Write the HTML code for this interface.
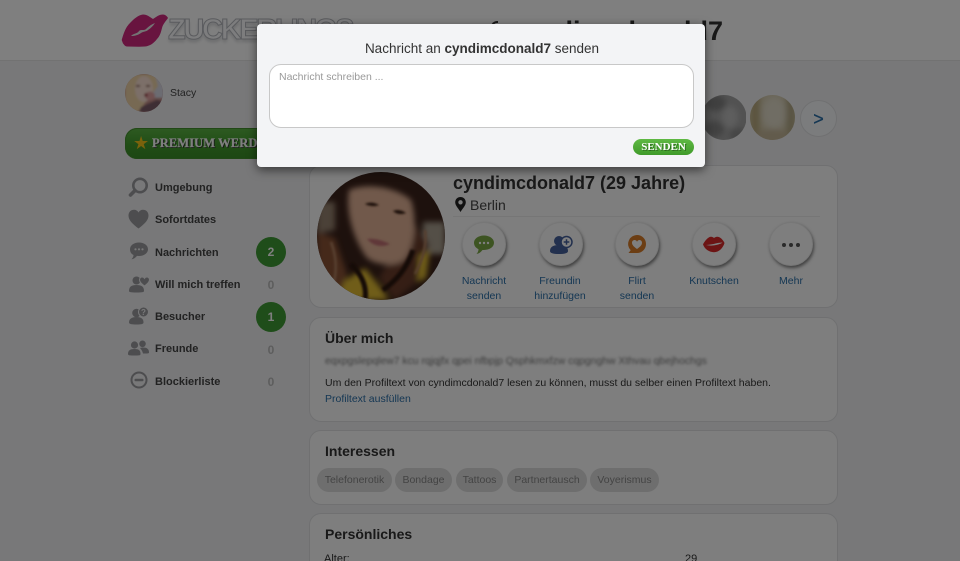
<!DOCTYPE html>
<html lang="de"><head><meta charset="utf-8"><title>cyndimcdonald7</title>
<style>
html,body{margin:0;padding:0;width:960px;height:561px;overflow:hidden;background:#f0f1f3;font-family:"Liberation Sans",sans-serif;color:#333}
#w{position:absolute;left:0;top:0;width:960px;height:561px;overflow:hidden;background:#f0f1f3}
.a{position:absolute;white-space:nowrap}
#hdr{left:0;top:0;width:960px;height:60px;background:#fff;border-bottom:1px solid #e4e4e4}
.card{position:absolute;left:309px;width:527px;background:#fcfcfc;border:1px solid #e0e1e3;border-radius:12px;box-sizing:content-box}
.m{left:155px;font-size:11px;font-weight:bold;color:#444;line-height:14px}
.z{left:265px;width:12px;text-align:center;font-size:12px;font-weight:bold;color:#bbb;line-height:14px}
.bd{left:256px;width:30px;height:30px;border-radius:50%;background:#3f9a35;color:#fff;font-size:12px;font-weight:bold;text-align:center;line-height:30px}
.c{width:44px;height:44px;border-radius:50%;background:#fcfcfc;box-shadow:1px 2px 3px rgba(0,0,0,.5);border:1px solid #eee;box-sizing:border-box;top:222px}
.l{width:76px;text-align:center;font-size:10.5px;line-height:15px;color:#2a6fa8;top:274px;white-space:normal}
.h{left:325px;font-size:14px;font-weight:bold;color:#333;line-height:16px}
.t{top:468px;height:24px;border-radius:12px;background:#dcdcdc;color:#888;font-size:10.5px;line-height:25px;text-align:center}
#ov{left:0;top:0;width:960px;height:561px;background:rgba(0,0,0,.5)}
#mod{left:257px;top:24px;width:448px;height:143px;background:#f3f4f6;border-radius:4px;box-shadow:0 3px 10px rgba(0,0,0,.55)}
</style></head><body><div id="w">
<div class="a" id="hdr"></div>

<svg class="a" style="left:121px;top:13px" width="48" height="35" viewBox="0 0 48 35"><path fill="#d0287f" d="M.7 27C3 19 5 14 9 10c4-4 8-8 13-8.500 4 0 7 2.500 10 4.500 3-2 6-4.500 10-4.500 2 0 4 1.500 5 3.500-2 3-5 6-6 10-1 4-2 8-5 11-3 4-7 7-12 7.500-6 .5-12 0-18 0-2 0-3-2-4-3z"/><path fill="#e8e8e8" d="M10 23c3-3 6-2 8-5 2-2 5 0 7-2 3-3 6-5 9-6-2 3-4 5-7 7-2 2-4 1-7 3-3 2-6 3-10 3z"/></svg>
<div class="a" style="left:168px;top:12px;font-size:29px;font-weight:bold;color:#fbfbfc;-webkit-text-stroke:1px #b4b7bd;letter-spacing:-2.300px;line-height:36px;text-shadow:0 3px 3px #d5d6d8">ZUCKERLINGS</div>
<div class="a" style="left:491px;top:21px;width:7px;height:6px;border:2px solid #333;border-bottom:0;border-right:0;border-radius:6px 0 0 0;box-sizing:border-box"></div>
<div class="a" style="left:491px;top:14px;width:232px;text-align:right;font-size:27px;font-weight:bold;color:#333;line-height:34px">cyndimcdonald7</div>

<svg class="a" style="left:125px;top:74px" width="38" height="38" viewBox="0 0 38 38"><defs><clipPath id="ca"><circle cx="19" cy="19" r="19"/></clipPath><filter id="b1"><feGaussianBlur stdDeviation="1"/></filter></defs><g clip-path="url(#ca)"><rect width="38" height="38" fill="#c08a86"/><g filter="url(#b1)"><rect x="27" y="0" width="12" height="24" fill="#d8d8e4"/><path d="M0 0h30l3 12-6 8-14 18H0z" fill="#eed3a6"/><ellipse cx="19" cy="15" rx="9" ry="13" fill="#f8dfd2"/><ellipse cx="13" cy="12" rx="2.200" ry="1.200" fill="#a07a70"/><ellipse cx="23" cy="12" rx="2.200" ry="1.200" fill="#a07a70"/><ellipse cx="25" cy="22" rx="5" ry="4.500" fill="#e0a0a0"/><circle cx="21" cy="21" r="1.800" fill="#a5484f"/><path d="M16 33l16-7 6 2v10H14z" fill="#7c5c68"/></g></g></svg>
<div class="a" style="left:170px;top:87px;font-size:10.500px;line-height:13px;color:#444">Stacy</div>

<div class="a" style="left:125px;top:128px;width:150px;height:31px;border-radius:12px;background:linear-gradient(#5cb544,#429a2c 55%,#3a8f27);box-shadow:inset 0 0 0 1px #44902f"></div>
<div class="a" style="left:133px;top:134px;font-size:18px;line-height:19px;color:#f5c518">★</div>
<div class="a" style="left:152px;top:136px;font-family:'Liberation Serif',serif;font-size:12.500px;font-weight:bold;line-height:15px;letter-spacing:.1px;color:#fff;text-shadow:1px 1px 0 #333;-webkit-text-stroke:.2px #fff">PREMIUM WERDEN</div>

<svg class="a" style="left:128px;top:176px" width="22" height="22" viewBox="0 0 22 22"><circle cx="12" cy="9.500" r="6.700" fill="none" stroke="#9a9b9e" stroke-width="2.600"/><path d="M7 14.500L2.500 19" stroke="#9a9b9e" stroke-width="3.600" stroke-linecap="round"/></svg>
<svg class="a" style="left:128px;top:209px" width="21" height="20" viewBox="0 0 21 20"><path fill="#9a9b9e" d="M10.500 19.500C4 14.500.5 11 .5 6.500.5 3 3 .8 6 .8c2 0 3.500 1 4.500 2.700C11.500 1.800 13 .8 15 .8c3 0 5.500 2.200 5.500 5.700 0 4.500-3.500 8-10 13z"/></svg>
<svg class="a" style="left:129px;top:242px" width="20" height="18" viewBox="0 0 20 18"><path fill="#9a9b9e" d="M10 .5c5 0 9 2.900 9 6.700S15 14 10 14l-2-.1C6.500 15.500 5 17 2.500 17.300 3.800 16 4.500 14.500 4.500 13 2 11.800 1 9.500 1 7.200 1 3.400 5 .5 10 .5z"/><circle cx="6.500" cy="7.300" r="1.100" fill="#eee"/><circle cx="10" cy="7.300" r="1.100" fill="#eee"/><circle cx="13.500" cy="7.300" r="1.100" fill="#eee"/></svg>
<svg class="a" style="left:129px;top:275px" width="21" height="18" viewBox="0 0 21 18"><circle cx="7.500" cy="5.500" r="4" fill="#9a9b9e"/><path fill="#9a9b9e" d="M0 16c0-4 2-6 7.500-6s7.500 2 7.500 6c0 1-1 1.500-7.500 1.500S0 17 0 16z"/><path fill="#9a9b9e" stroke="#f0f1f3" d="M15.500 11C12 8.500 10.500 7 10.500 4.800c0-1.600 1.200-2.800 2.600-2.800 1 0 1.900.5 2.400 1.400.5-.9 1.400-1.400 2.400-1.400 1.400 0 2.600 1.200 2.600 2.800 0 2.200-1.500 3.700-5 6.200z"/></svg>
<svg class="a" style="left:129px;top:307px" width="20" height="18" viewBox="0 0 20 18"><circle cx="7.500" cy="6" r="4.300" fill="#9a9b9e"/><path fill="#9a9b9e" d="M0 15.500c0-3.500 2.500-5.500 7.500-5.500s7 2 7 5.500c0 1.500-2 2-7 2s-7.500-.5-7.500-2z"/><circle cx="14.500" cy="5" r="5" fill="#9a9b9e" stroke="#f0f1f3"/><text x="14.500" y="8" font-size="8" font-weight="bold" text-anchor="middle" fill="#f0f1f3" font-family="Liberation Sans">?</text></svg>
<svg class="a" style="left:128px;top:340px" width="21" height="16" viewBox="0 0 21 16"><circle cx="6.500" cy="5" r="3.600" fill="#9a9b9e"/><path fill="#9a9b9e" d="M0 14c0-3.500 2-5 6.500-5s6 1.500 6 5c0 1.500-1.500 1.500-6 1.500S0 15.500 0 14z"/><circle cx="14.500" cy="3.800" r="3.300" fill="#9a9b9e"/><path fill="#9a9b9e" d="M12 8c1-.500 2-.5 3-.5 4 0 6 1.500 6 5 0 1-1 1-6 1-.5-2-1.500-4-3-5.500z"/></svg>
<svg class="a" style="left:130px;top:371px" width="18" height="18" viewBox="0 0 18 18"><circle cx="9" cy="9" r="7.500" fill="none" stroke="#9a9b9e" stroke-width="2"/><rect x="4.500" y="7.700" width="9" height="2.600" rx="1" fill="#9a9b9e"/></svg>

<div class="a m" style="top:181px">Umgebung</div>
<div class="a m" style="top:213px">Sofortdates</div>
<div class="a m" style="top:246px">Nachrichten</div>
<div class="a m" style="top:278px">Will mich treffen</div>
<div class="a m" style="top:310px">Besucher</div>
<div class="a m" style="top:342px">Freunde</div>
<div class="a m" style="top:375px">Blockierliste</div>
<div class="a bd" style="top:237px">2</div>
<div class="a bd" style="top:302px">1</div>
<div class="a z" style="top:278px">0</div>
<div class="a z" style="top:343px">0</div>
<div class="a z" style="top:375px">0</div>

<svg class="a" style="left:702px;top:95px" width="44" height="45" viewBox="0 0 44 45"><defs><clipPath id="cb"><circle cx="22" cy="22.500" r="22.500"/></clipPath><filter id="b2"><feGaussianBlur stdDeviation="3"/></filter></defs><g clip-path="url(#cb)"><rect width="44" height="45" fill="#a4a4a4"/><g filter="url(#b2)"><ellipse cx="14" cy="8" rx="10" ry="8" fill="#808080"/><ellipse cx="28" cy="22" rx="8" ry="11" fill="#bcbcbc"/><ellipse cx="12" cy="34" rx="10" ry="8" fill="#848484"/><ellipse cx="36" cy="40" rx="8" ry="7" fill="#8c8c8c"/></g></g></svg>
<svg class="a" style="left:750px;top:95px" width="45" height="45" viewBox="0 0 45 45"><defs><clipPath id="cc"><circle cx="22.500" cy="22.500" r="22.500"/></clipPath><filter id="b3"><feGaussianBlur stdDeviation="3"/></filter></defs><g clip-path="url(#cc)"><rect width="45" height="45" fill="#d4cbb0"/><g filter="url(#b3)"><rect x="0" y="0" width="10" height="45" fill="#b8a97e"/><rect x="36" y="0" width="10" height="45" fill="#b2a886"/><ellipse cx="24" cy="18" rx="12" ry="16" fill="#e0dac8"/><ellipse cx="22" cy="42" rx="18" ry="8" fill="#c4b698"/></g></g></svg>
<div class="a" style="left:800px;top:100px;width:37px;height:37px;border-radius:50%;background:#f7f8fa;border:1px solid #e0e1e3;box-sizing:border-box;text-align:center;font-size:18px;line-height:36px;color:#2a6fa8;-webkit-text-stroke:.3px #2a6fa8">&gt;</div>

<div class="card" style="top:165px;height:141px"></div>
<svg class="a" style="left:317px;top:172px" width="128" height="128" viewBox="0 0 128 128"><defs><clipPath id="cd"><circle cx="64" cy="64" r="64"/></clipPath><filter id="b4"><feGaussianBlur stdDeviation="3"/></filter><filter id="b5"><feGaussianBlur stdDeviation="1"/></filter></defs><g clip-path="url(#cd)"><rect width="128" height="128" fill="#3b221a"/><g filter="url(#b4)"><path d="M0 30h18v28L0 62z" fill="#968270"/><rect x="106" y="50" width="22" height="32" fill="#a89e8e"/><path d="M0 60l18 6 12 36-8 26H0z" fill="#8a5236"/><path d="M92 44l20 28-10 36-24 20-16-22 18-30z" fill="#6a3d2c"/><path d="M32 18C52 10 80 16 94 28c6 18 4 42-4 56-6 12-30 10-40 2C38 70 28 42 32 18z" fill="#e2b296"/><path d="M20 128l8-20 20-12 16 20 8 12z" fill="#e0bb30"/><path d="M102 84l11-6-4 28-8 4z" fill="#e0bb30"/></g><g filter="url(#b5)"><path d="M48 32c4-2 9-2 14 1-5 2-10 1-14-1zM76 39c4-2 9-1 13 2-5 2-10 1-13-2z" fill="#3a2018"/><path d="M50 67c7-1 15 1 23 5-8 4-17 2-23-5z" fill="#c06f72"/><path d="M34 92C46 104 50 116 48 128M96 78c-6 18-16 30-30 40" stroke="#2b1610" stroke-width="5" fill="none"/><path d="M14 70c6 16 6 30 2 44M108 58c2 14-2 30-10 44" stroke="#b08060" stroke-width="2.500" fill="none"/></g></g></svg>
<div class="a" style="left:453px;top:173px;font-size:18px;font-weight:bold;color:#333;line-height:21px">cyndimcdonald7 (29 Jahre)</div>
<svg class="a" style="left:455px;top:197px" width="11" height="15" viewBox="0 0 11 15"><path fill-rule="evenodd" fill="#222" d="M5.500 0C2.500 0 .2 2.300.2 5.300c0 3.400 3.300 6.300 5.300 9.700 2-3.400 5.300-6.300 5.300-9.700C10.800 2.300 8.500 0 5.500 0zm0 3.100a2.200 2.200 0 1 1 0 4.400 2.200 2.200 0 0 1 0-4.400z"/></svg>
<div class="a" style="left:470px;top:197px;font-size:14px;line-height:16px;color:#444">Berlin</div>
<div class="a" style="left:453px;top:216px;width:367px;height:1px;background:#ececec"></div>

<div class="a c" style="left:462px"></div>
<div class="a c" style="left:539px"></div>
<div class="a c" style="left:615px"></div>
<div class="a c" style="left:692px"></div>
<div class="a c" style="left:769px"></div>
<svg class="a" style="left:473px;top:235px" width="22" height="20" viewBox="0 0 22 20"><path fill="#7aa844" d="M11 .5c5.700 0 10 3.200 10 7.300S16.700 15 11 15h-1.500C8 17 6 18.500 3.500 19c1.200-1.300 2-2.800 2-4.800C2.800 13 1 10.700 1 7.800 1 3.700 5.300.5 11 .5z"/><circle cx="7" cy="8" r="1.200" fill="#fff"/><circle cx="11" cy="8" r="1.200" fill="#fff"/><circle cx="15" cy="8" r="1.200" fill="#fff"/></svg>
<svg class="a" style="left:550px;top:235px" width="23" height="20" viewBox="0 0 23 20"><circle cx="9" cy="6" r="5" fill="#45609c"/><path fill="#45609c" d="M0 16c0-4 3-6 9-6s9 2 9 6c0 2-3 3-9 3s-9-1-9-3z"/><circle cx="16.500" cy="7" r="5.500" fill="#fff" stroke="#45609c" stroke-width="1.500"/><path d="M16.500 4.200v5.600M13.700 7h5.600" stroke="#45609c" stroke-width="1.500"/></svg>
<svg class="a" style="left:627px;top:235px" width="20" height="20" viewBox="0 0 20 20"><path fill="#d87c28" d="M10 0a9 9 0 0 1 0 18H1.500l2.200-2.700A9 9 0 0 1 10 0z"/><path fill="#fff" d="M10 14C6.500 11.500 5 9.700 5 7.700 5 6.200 6.200 5 7.500 5c1 0 2 .6 2.500 1.700C10.500 5.600 11.500 5 12.500 5 13.800 5 15 6.200 15 7.700c0 2-1.500 3.800-5 6.300z"/></svg>
<svg class="a" style="left:703px;top:236px" width="22" height="17" viewBox="0 0 22 17"><path fill="#d82828" d="M0 8.300C2 5 5 .8 8 .8c1.500 0 2.500.8 3 1.200.5-.4 1.800-1.200 3.200-1.200 3 0 5.800 3 7.300 6.200-1.500 5-5.500 9.200-10.500 9.200C6 16.200 1.500 13 0 8.300z"/><path fill="#fff" d="M3 9c4-.3 7-.8 9.500-1.500 2.500-.5 4.700-1 7-.8-3 1.400-5.500 2.300-8.500 2.700-2.800.3-5.500.2-8-.4z"/></svg>
<svg class="a" style="left:781px;top:242px" width="20" height="6" viewBox="0 0 20 6"><circle cx="3" cy="3" r="2" fill="#555"/><circle cx="10" cy="3" r="2" fill="#555"/><circle cx="17" cy="3" r="2" fill="#555"/></svg>
<div class="a l" style="left:446px">Nachricht<br>senden</div>
<div class="a l" style="left:522px">Freundin<br>hinzufügen</div>
<div class="a l" style="left:599px">Flirt<br>senden</div>
<div class="a l" style="left:676px">Knutschen</div>
<div class="a l" style="left:753px">Mehr</div>

<div class="card" style="top:317px;height:103px"></div>
<div class="a h" style="top:330px">Über mich</div>
<div class="a" style="left:325px;top:356px;font-size:10.400px;line-height:12px;color:#777;filter:blur(1.300px)">eqxpgslepqlew7 kcu rqjqjfx qpei nfbpjp Qsphkmxfzw cqpgnghw Xthvau qbejhochgs</div>
<div class="a" style="left:325px;top:377px;font-size:10.500px;line-height:13px;color:#333;width:460px">Um den Profiltext von cyndimcdonald7 lesen zu können, musst du selber einen Profiltext haben.</div>
<div class="a" style="left:325px;top:393px;font-size:10.500px;line-height:13px;color:#2a6fa8">Profiltext ausfüllen</div>

<div class="card" style="top:430px;height:73px"></div>
<div class="a h" style="top:443px">Interessen</div>
<div class="a t" style="left:317px;width:75px">Telefonerotik</div>
<div class="a t" style="left:395px;width:57px">Bondage</div>
<div class="a t" style="left:456px;width:47px">Tattoos</div>
<div class="a t" style="left:507px;width:80px">Partnertausch</div>
<div class="a t" style="left:590px;width:69px">Voyerismus</div>

<div class="card" style="top:513px;height:47px;border-bottom:0;border-radius:12px 12px 0 0"></div>
<div class="a h" style="top:526px">Persönliches</div>
<div class="a" style="left:324px;top:553px;height:8px;overflow:hidden;font-size:11px;line-height:13px;color:#333">Alter:</div>
<div class="a" style="left:685px;top:553px;height:8px;overflow:hidden;font-size:11px;line-height:13px;color:#333">29</div>

<div class="a" id="ov"></div>

<div class="a" id="mod"></div>
<div class="a" style="left:258px;top:41px;width:448px;text-align:center;font-size:13.500px;line-height:16px;color:#333">Nachricht an <b>cyndimcdonald7</b> senden</div>
<div class="a" style="left:269px;top:64px;width:425px;height:64px;box-sizing:border-box;background:#fff;border:1px solid #c8c8c8;border-radius:12px"></div>
<div class="a" style="left:279px;top:71px;font-size:10.500px;line-height:12px;color:#999">Nachricht schreiben ...</div>
<div class="a" style="left:633px;top:139px;width:61px;height:16px;border-radius:8px;background:linear-gradient(#5fb944,#3f9a2a);text-align:center;font-family:'Liberation Serif',serif;font-size:11px;font-weight:bold;line-height:17px;color:#fff;text-shadow:1px 1px 0 #2b6a1c">SENDEN</div>
</div></body></html>
